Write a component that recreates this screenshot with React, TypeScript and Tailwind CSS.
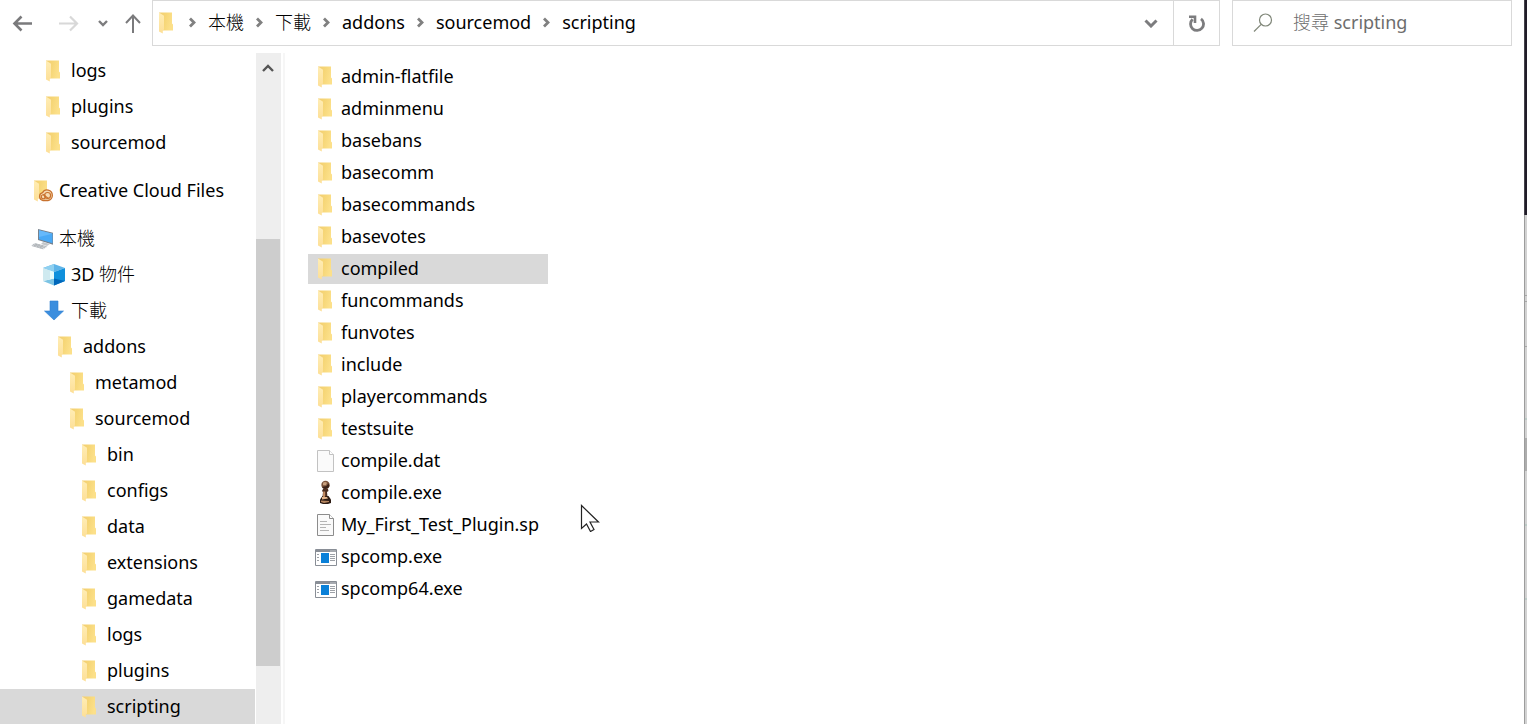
import React from "react";

type IconKind =
  | "folder"
  | "cloud"
  | "computer"
  | "cube"
  | "download"
  | "blank"
  | "pawn"
  | "text"
  | "app";

type Entry = { name: string; icon: IconKind; selected?: boolean };
type TreeEntry = Entry & { depth: number; spaced?: boolean };

const tree: TreeEntry[] = [
  { name: "logs", icon: "folder", depth: 1 },
  { name: "plugins", icon: "folder", depth: 1 },
  { name: "sourcemod", icon: "folder", depth: 1 },
  { name: "Creative Cloud Files", icon: "cloud", depth: 0, spaced: true },
  { name: "本機", icon: "computer", depth: 0, spaced: true },
  { name: "3D 物件", icon: "cube", depth: 1 },
  { name: "下載", icon: "download", depth: 1 },
  { name: "addons", icon: "folder", depth: 2 },
  { name: "metamod", icon: "folder", depth: 3 },
  { name: "sourcemod", icon: "folder", depth: 3 },
  { name: "bin", icon: "folder", depth: 4 },
  { name: "configs", icon: "folder", depth: 4 },
  { name: "data", icon: "folder", depth: 4 },
  { name: "extensions", icon: "folder", depth: 4 },
  { name: "gamedata", icon: "folder", depth: 4 },
  { name: "logs", icon: "folder", depth: 4 },
  { name: "plugins", icon: "folder", depth: 4 },
  { name: "scripting", icon: "folder", depth: 4, selected: true },
];

const files: Entry[] = [
  { name: "admin-flatfile", icon: "folder" },
  { name: "adminmenu", icon: "folder" },
  { name: "basebans", icon: "folder" },
  { name: "basecomm", icon: "folder" },
  { name: "basecommands", icon: "folder" },
  { name: "basevotes", icon: "folder" },
  { name: "compiled", icon: "folder", selected: true },
  { name: "funcommands", icon: "folder" },
  { name: "funvotes", icon: "folder" },
  { name: "include", icon: "folder" },
  { name: "playercommands", icon: "folder" },
  { name: "testsuite", icon: "folder" },
  { name: "compile.dat", icon: "blank" },
  { name: "compile.exe", icon: "pawn" },
  { name: "My_First_Test_Plugin.sp", icon: "text" },
  { name: "spcomp.exe", icon: "app" },
  { name: "spcomp64.exe", icon: "app" },
];

const crumbs = ["本機", "下載", "addons", "sourcemod", "scripting"];

const indents = ["pl-[31px]", "pl-[43px]", "pl-[55px]", "pl-[67px]", "pl-[79px]"];

function FolderShape() {
  const id = React.useId();
  return (
    <>
      <defs>
        <linearGradient id={`${id}back`} x1="0" x2="1" y1="0" y2="0.300">
          <stop offset="0" stopColor="#f2cd70" />
          <stop offset="0.500" stopColor="#f6d677" />
          <stop offset="1" stopColor="#fce08a" />
        </linearGradient>
        <linearGradient id={`${id}flap`} x1="0" x2="0" y1="0" y2="1">
          <stop offset="0" stopColor="#ffedb5" />
          <stop offset="1" stopColor="#fddf96" />
        </linearGradient>
      </defs>
      <path d="M3 2.500h13v11l1 1v6H5z" fill={`url(#${id}back)`} />
      <path d="M3 2.500l5 3.200v13.800l-1.200 1v3L3 21.500z" fill={`url(#${id}flap)`} />
    </>
  );
}

function Icon({ kind }: { kind: IconKind }) {
  return (
    <svg viewBox="0 0 22 24" className="h-6 w-[22px] shrink-0" aria-hidden="true">
      {kind === "folder" && <FolderShape />}
      {kind === "cloud" && (
        <>
          <FolderShape />
          <g fill="none" stroke="#c8722e">
            <path
              d="M12 22.500a4 4 0 0 1-.5-7.800 5.200 5.200 0 0 1 9.800 2.300 5 5 0 0 1-4.300 5.500z"
              fill="#f6dcb4"
              strokeWidth="1.300"
            />
            <circle cx="16.600" cy="17.500" r="3" strokeWidth="1.200" />
            <circle cx="12.300" cy="18.800" r="2" strokeWidth="1.100" />
            <path d="M12 16.500l5.500 4" strokeWidth="1.100" />
          </g>
        </>
      )}
      {kind === "computer" && (
        <>
          <path d="M7 3l15.500 4v12L7 14z" fill="#77818c" />
          <path d="M8 4.200l13.500 3.600v9.500L8 13.200z" fill="#4aa9f5" />
          <path d="M8 4.200l13.500 3.600L8 11z" fill="#66b9fb" />
          <path d="M12 16l7 2-3 2-6-2z" fill="#c3c7cb" />
          <path d="M3.500 17l13 3.500-4 3L0 19.500z" fill="#dfe2e5" />
          <path
            d="M2 18.500l12 3.200M4 17.700l11.500 3M1 19.700l11 3M6 18l-3 2M9 18.800l-3 2.200M12 19.800l-3 2.200"
            stroke="#989da2"
            strokeWidth=".6"
          />
        </>
      )}
      {kind === "cube" && (
        <>
          <path d="M11 2l11 4-11 4L0 6z" fill="#5fb4e8" />
          <path d="M11 2v8L0 6z" fill="#8fd0f0" />
          <path d="M22 6l-11 4v13.500L22 19z" fill="#1090dc" />
          <path d="M11 9.500v7L0 19l11 4.500z" fill="#7cc4e4" />
          <path d="M11 16.500L22 19l-11 4.500z" fill="#0067ba" />
          <path d="M0 6l11 4v6.500L0 19z" fill="#cfeaf0" />
          <path d="M7 8.500l4 1.500v6.500l-4 .8z" fill="#e6fbfc" />
        </>
      )}
      {kind === "download" && (
        <path d="M7 3h8v10h5.500L11 22 1.500 13H7z" fill="#3b8ede" stroke="#2f80d2" strokeWidth=".6" />
      )}
      {(kind === "blank" || kind === "text") && (
        <>
          <path
            d="M2.500 2.500h12l4 4v17h-16z"
            fill="#fafafa"
            stroke={kind === "text" ? "#8c8c8c" : "#c2c2c2"}
          />
          <path d="M14.500 2.500v4h4" fill="#fff" stroke={kind === "text" ? "#8c8c8c" : "#c2c2c2"} />
          {kind === "text" && (
            <path d="M5 9.500h7M5 12.500h11M5 15.500h6M5 18.500h9" stroke="#b4b4b4" />
          )}
        </>
      )}
      {kind === "pawn" && (
        <>
          <path d="M8 9h5l.5 2-1.500 1 .5 5h-5l.5-5L7 11z" fill="#4a2d20" />
          <path d="M7.500 16h6l2.500 3.500v3.500l-3 1H8l-3-1v-3.500z" fill="#2c1b13" />
          <circle cx="10.500" cy="5" r="4.200" fill="#7a523a" />
          <path d="M7 7a4.200 4.200 0 0 0 7.500-1L13.500 3.500l-2 2.500z" fill="#3a2218" />
          <path d="M8 2.700q2-1.500 4 0l-1 2.500H8z" fill="#c8a07e" />
          <path d="M8.200 11.500h2v5L8 18z" fill="#c48d63" />
          <path d="M7 17h5l1 1.500-6 1z" fill="#e3b58b" />
          <path d="M6 20.500l8 .5v1L9 23l-3-1z" fill="#b5855f" />
        </>
      )}
      {kind === "app" && (
        <>
          <path d="M.5 5.500h21v16H.5z" fill="#fff" stroke="#898e96" />
          <path d="M1 6h20v2H1z" fill="#898e96" />
          <path d="M15.500 7h1M17.500 7h1M19.500 7h1" stroke="#fff" />
          <path d="M6 9h8v10H6z" fill="#0a80d8" />
          <path d="M2 10.500h2M2 13.500h2M2 16.500h2M15 10.500h5M15 12.500h5M15 14.500h5M15 16.500h5" stroke="#9da1a7" />
        </>
      )}
    </svg>
  );
}

function CrumbChevron() {
  return (
    <svg viewBox="0 0 7 12" className="h-3 w-[7px] shrink-0" fill="none" stroke="#808080" strokeWidth="2.800" aria-hidden="true">
      <path d="M1 2.500L5 6.500l-4 4" />
    </svg>
  );
}

function NavButton({ label, children }: { label: string; children: React.ReactNode }) {
  return (
    <button type="button" aria-label={label} className="flex h-full items-center justify-center">
      {children}
    </button>
  );
}

function TopBar() {
  return (
    <header className="flex h-[46px] shrink-0 pr-3">
      <nav aria-label="History" className="flex w-[152px] shrink-0 items-center justify-between pl-3 pr-[10px]">
        <NavButton label="Back">
          <svg viewBox="0 0 20 20" className="h-5 w-5" fill="none" stroke="#7a7a7c" strokeWidth="2.600">
            <path d="M20 10.500H2.500M9.500 3.500l-7 7 7 7" />
          </svg>
        </NavButton>
        <div className="flex h-full pl-3">
          <NavButton label="Forward">
            <svg viewBox="0 0 20 20" className="h-5 w-5" fill="none" stroke="#d8d8d8" strokeWidth="2.200">
              <path d="M0 10.500h18M11 3.500l7 7-7 7" />
            </svg>
          </NavButton>
        </div>
        <div className="flex h-full pl-1">
          <NavButton label="Recent locations">
            <svg viewBox="0 0 12 10" className="h-[10px] w-3" fill="none" stroke="#7c7c7e" strokeWidth="2.400">
              <path d="M2 3l4 4 4-4" />
            </svg>
          </NavButton>
        </div>
        <NavButton label="Up">
          <svg viewBox="0 0 18 20" className="h-5 w-[18px]" fill="none" stroke="#7a7a7c" strokeWidth="2">
            <path d="M9 20.500V2.500M2 10l7-7.500 7 7.500" />
          </svg>
        </NavButton>
      </nav>
      <div className="flex min-w-0 flex-1 border border-[#d9d9d9]">
        <ol className="flex min-w-0 flex-1 items-center gap-3 pb-[3px] pl-[3px]">
          <li className="flex w-[21px]">
            <Icon kind="folder" />
          </li>
          {crumbs.map((crumb) => (
            <li key={crumb} className="flex items-center gap-3">
              <CrumbChevron />
              <a href="#" className="whitespace-nowrap">
                {crumb}
              </a>
            </li>
          ))}
        </ol>
        <button type="button" aria-label="Previous locations" className="flex w-11 items-center justify-center">
          <svg viewBox="0 0 14 10" className="h-[10px] w-[14px]" fill="none" stroke="#7c7c7e" strokeWidth="3">
            <path d="M1.500 2.500L7 8l5.500-5.500" />
          </svg>
        </button>
        <button
          type="button"
          aria-label="Refresh"
          className="flex w-[46px] items-center justify-center border-l border-[#d9d9d9]"
        >
          <svg viewBox="0 0 18 18" className="h-[18px] w-[18px]" fill="none" stroke="#7c7c7e" strokeWidth="2.800">
            <path d="M13 4.800A6.500 6.500 0 1 1 4.600 5.200" />
            <path d="M1 2.700h6v6.300" strokeWidth="2.600" />
          </svg>
        </button>
      </div>
      <label className="ml-3 flex w-[280px] shrink-0 items-center border border-[#d9d9d9] pb-[3px] pl-5">
        <svg viewBox="0 0 20 20" className="h-5 w-5 shrink-0" fill="none" stroke="#7f8678" strokeWidth="1.200">
          <circle cx="12.500" cy="8" r="6" />
          <path d="M8.200 12.300L1 19.500" />
        </svg>
        <input
          type="search"
          aria-label="Search scripting"
          placeholder="搜尋 scripting"
          className="ml-5 w-full min-w-0 bg-transparent outline-none placeholder:text-[#6d6d6d]"
        />
      </label>
    </header>
  );
}

function Sidebar() {
  return (
    <nav aria-label="Folders" className="w-64 shrink-0 overflow-hidden pr-px pt-[6px]">
      <ul>
        {tree.map((item, i) => (
          <li key={i} className={item.spaced ? "pt-3" : ""}>
            <a
              href="#"
              aria-current={item.selected ? "page" : undefined}
              className={`flex h-9 items-center gap-[6px] whitespace-nowrap border-t border-white pb-px ${indents[item.depth]} ${
                item.selected ? "bg-[#d9d9d9]" : ""
              }`}
            >
              <Icon kind={item.icon} />
              {item.name}
            </a>
          </li>
        ))}
      </ul>
    </nav>
  );
}

function ScrollTrack() {
  return (
    <div className="mr-[2px] mt-[7px] flex w-[25px] shrink-0 flex-col bg-[#eeeeee] pr-px">
      <button type="button" aria-label="Scroll up" className="flex h-[30px] items-center justify-center">
        <svg viewBox="0 0 14 10" className="h-[10px] w-[14px]" fill="none" stroke="#555" strokeWidth="2.400">
          <path d="M2 8l5-5 5 5" />
        </svg>
      </button>
      <div className="flex flex-1 flex-col">
        <div className="grow-[156]" />
        <div className="grow-[427] bg-[#cdcdcd]" />
        <div className="grow-[58]" />
      </div>
    </div>
  );
}

function FileList() {
  return (
    <main className="mt-[7px] min-w-0 flex-1 border-l-2 border-[#f6f6f6] pl-[23px] pt-[9px]">
      <ul className="flex w-60 flex-col gap-[2px]">
        {files.map((file) => (
          <li key={file.name}>
            <a
              href="#"
              className={`flex h-[30px] items-center gap-1 whitespace-nowrap pb-[2px] pl-[7px] ${
                file.selected ? "bg-[#d9d9d9]" : ""
              }`}
            >
              <Icon kind={file.icon} />
              {file.name}
            </a>
          </li>
        ))}
      </ul>
    </main>
  );
}

function WindowEdge() {
  return (
    <div aria-hidden="true" className="flex w-[3px] shrink-0 flex-col border-l border-[#9c9c9c] bg-[#d2d2d2]">
      <div className="-ml-px h-[215px] border-l border-[#44424a] bg-[#201c28]" />
      <div className="mt-20 h-px bg-[#a8a8a8]" />
      <div className="mt-[5px] h-px bg-[#a8a8a8]" />
      <div className="mt-11 h-px bg-[#a8a8a8]" />
      <div className="mt-[71px] h-[2px] bg-[#bccac6]" />
      <div className="mt-[18px] h-[33px] bg-[#adadad]" />
      <div className="mt-[53px] h-[2px] bg-[#bccac6]" />
      <div className="mt-[72px] h-[2px] bg-[#bccac6]" />
    </div>
  );
}

export default function App() {
  return (
    <div className="relative flex h-screen overflow-hidden bg-white font-['Noto_Sans','Noto_Sans_CJK_TC_Light','Noto_Sans_CJK_TC',sans-serif] text-[18px] leading-6 text-black">
      <div className="flex min-w-0 flex-1 flex-col">
        <TopBar />
        <div className="flex min-h-0 flex-1">
          <Sidebar />
          <ScrollTrack />
          <FileList />
        </div>
      </div>
      <WindowEdge />
      <svg
        viewBox="0 0 20 28"
        className="pointer-events-none absolute left-[580px] top-[504px] h-7 w-5"
        fill="#fff"
        stroke="#222"
        strokeWidth="1.200"
        aria-hidden="true"
      >
        <path d="M1.500 1.500v23l5-4.500 4 7.500 3.500-2-4-7.500h8.500z" />
      </svg>
    </div>
  );
}
